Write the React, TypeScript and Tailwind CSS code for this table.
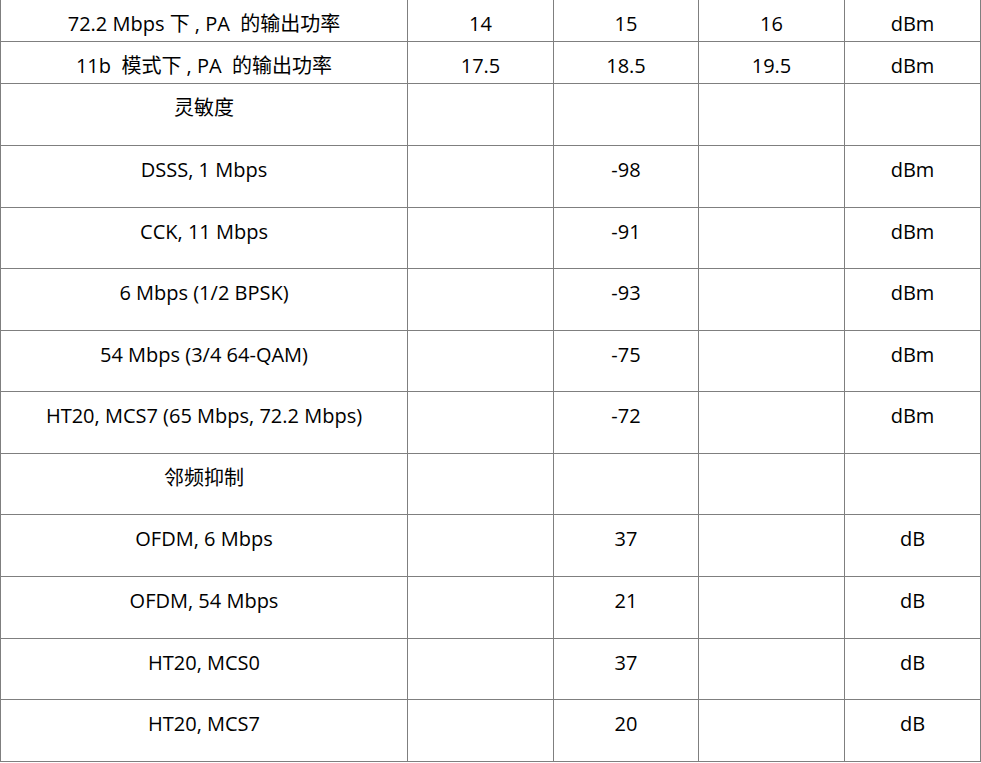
const rows: { h: string; cells: string[] }[] = [
  { h: "h-[42px]", cells: ["72.2 Mbps 下 , PA\u00a0\u00a0的输出功率", "14", "15", "16", "dBm"] },
  { h: "h-[42px]", cells: ["11b\u00a0\u00a0模式下 , PA\u00a0\u00a0的输出功率", "17.5", "18.5", "19.5", "dBm"] },
  { h: "h-[62px]", cells: ["灵敏度", "", "", "", ""] },
  { h: "h-[62px]", cells: ["DSSS, 1 Mbps", "", "-98", "", "dBm"] },
  { h: "h-[61px]", cells: ["CCK, 11 Mbps", "", "-91", "", "dBm"] },
  { h: "h-[62px]", cells: ["6 Mbps (1/2 BPSK)", "", "-93", "", "dBm"] },
  { h: "h-[61px]", cells: ["54 Mbps (3/4 64-QAM)", "", "-75", "", "dBm"] },
  { h: "h-[62px]", cells: ["HT20, MCS7 (65 Mbps, 72.2 Mbps)", "", "-72", "", "dBm"] },
  { h: "h-[61px]", cells: ["邻频抑制", "", "", "", ""] },
  { h: "h-[62px]", cells: ["OFDM, 6 Mbps", "", "37", "", "dB"] },
  { h: "h-[62px]", cells: ["OFDM, 54 Mbps", "", "21", "", "dB"] },
  { h: "h-[61px]", cells: ["HT20, MCS0", "", "37", "", "dB"] },
  { h: "h-[62px]", cells: ["HT20, MCS7", "", "20", "", "dB"] },
];

// column widths include each cell's right border
const cols = ["w-[407px]", "w-[146px]", "w-[145px]", "w-[146px]", "w-[136px]"];

export default function App() {
  return (
    <div className="w-[981px] h-[763px] bg-white overflow-hidden">
      <div
        className="w-[981px] border-l border-[#7f7f7f] text-black text-[20px] leading-[28px]"
        style={{ fontFamily: '"Open Sans", "Noto Sans CJK SC", sans-serif' }}
      >
        {rows.map((row, i) => (
          <div key={i} className={`flex border-b border-[#7f7f7f] ${row.h}`}>
            {row.cells.map((c, j) => (
              <div key={j} className={`${cols[j]} shrink-0 border-r border-[#7f7f7f] pt-[10px] text-center whitespace-nowrap`}>
                {c}
              </div>
            ))}
          </div>
        ))}
      </div>
    </div>
  );
}
